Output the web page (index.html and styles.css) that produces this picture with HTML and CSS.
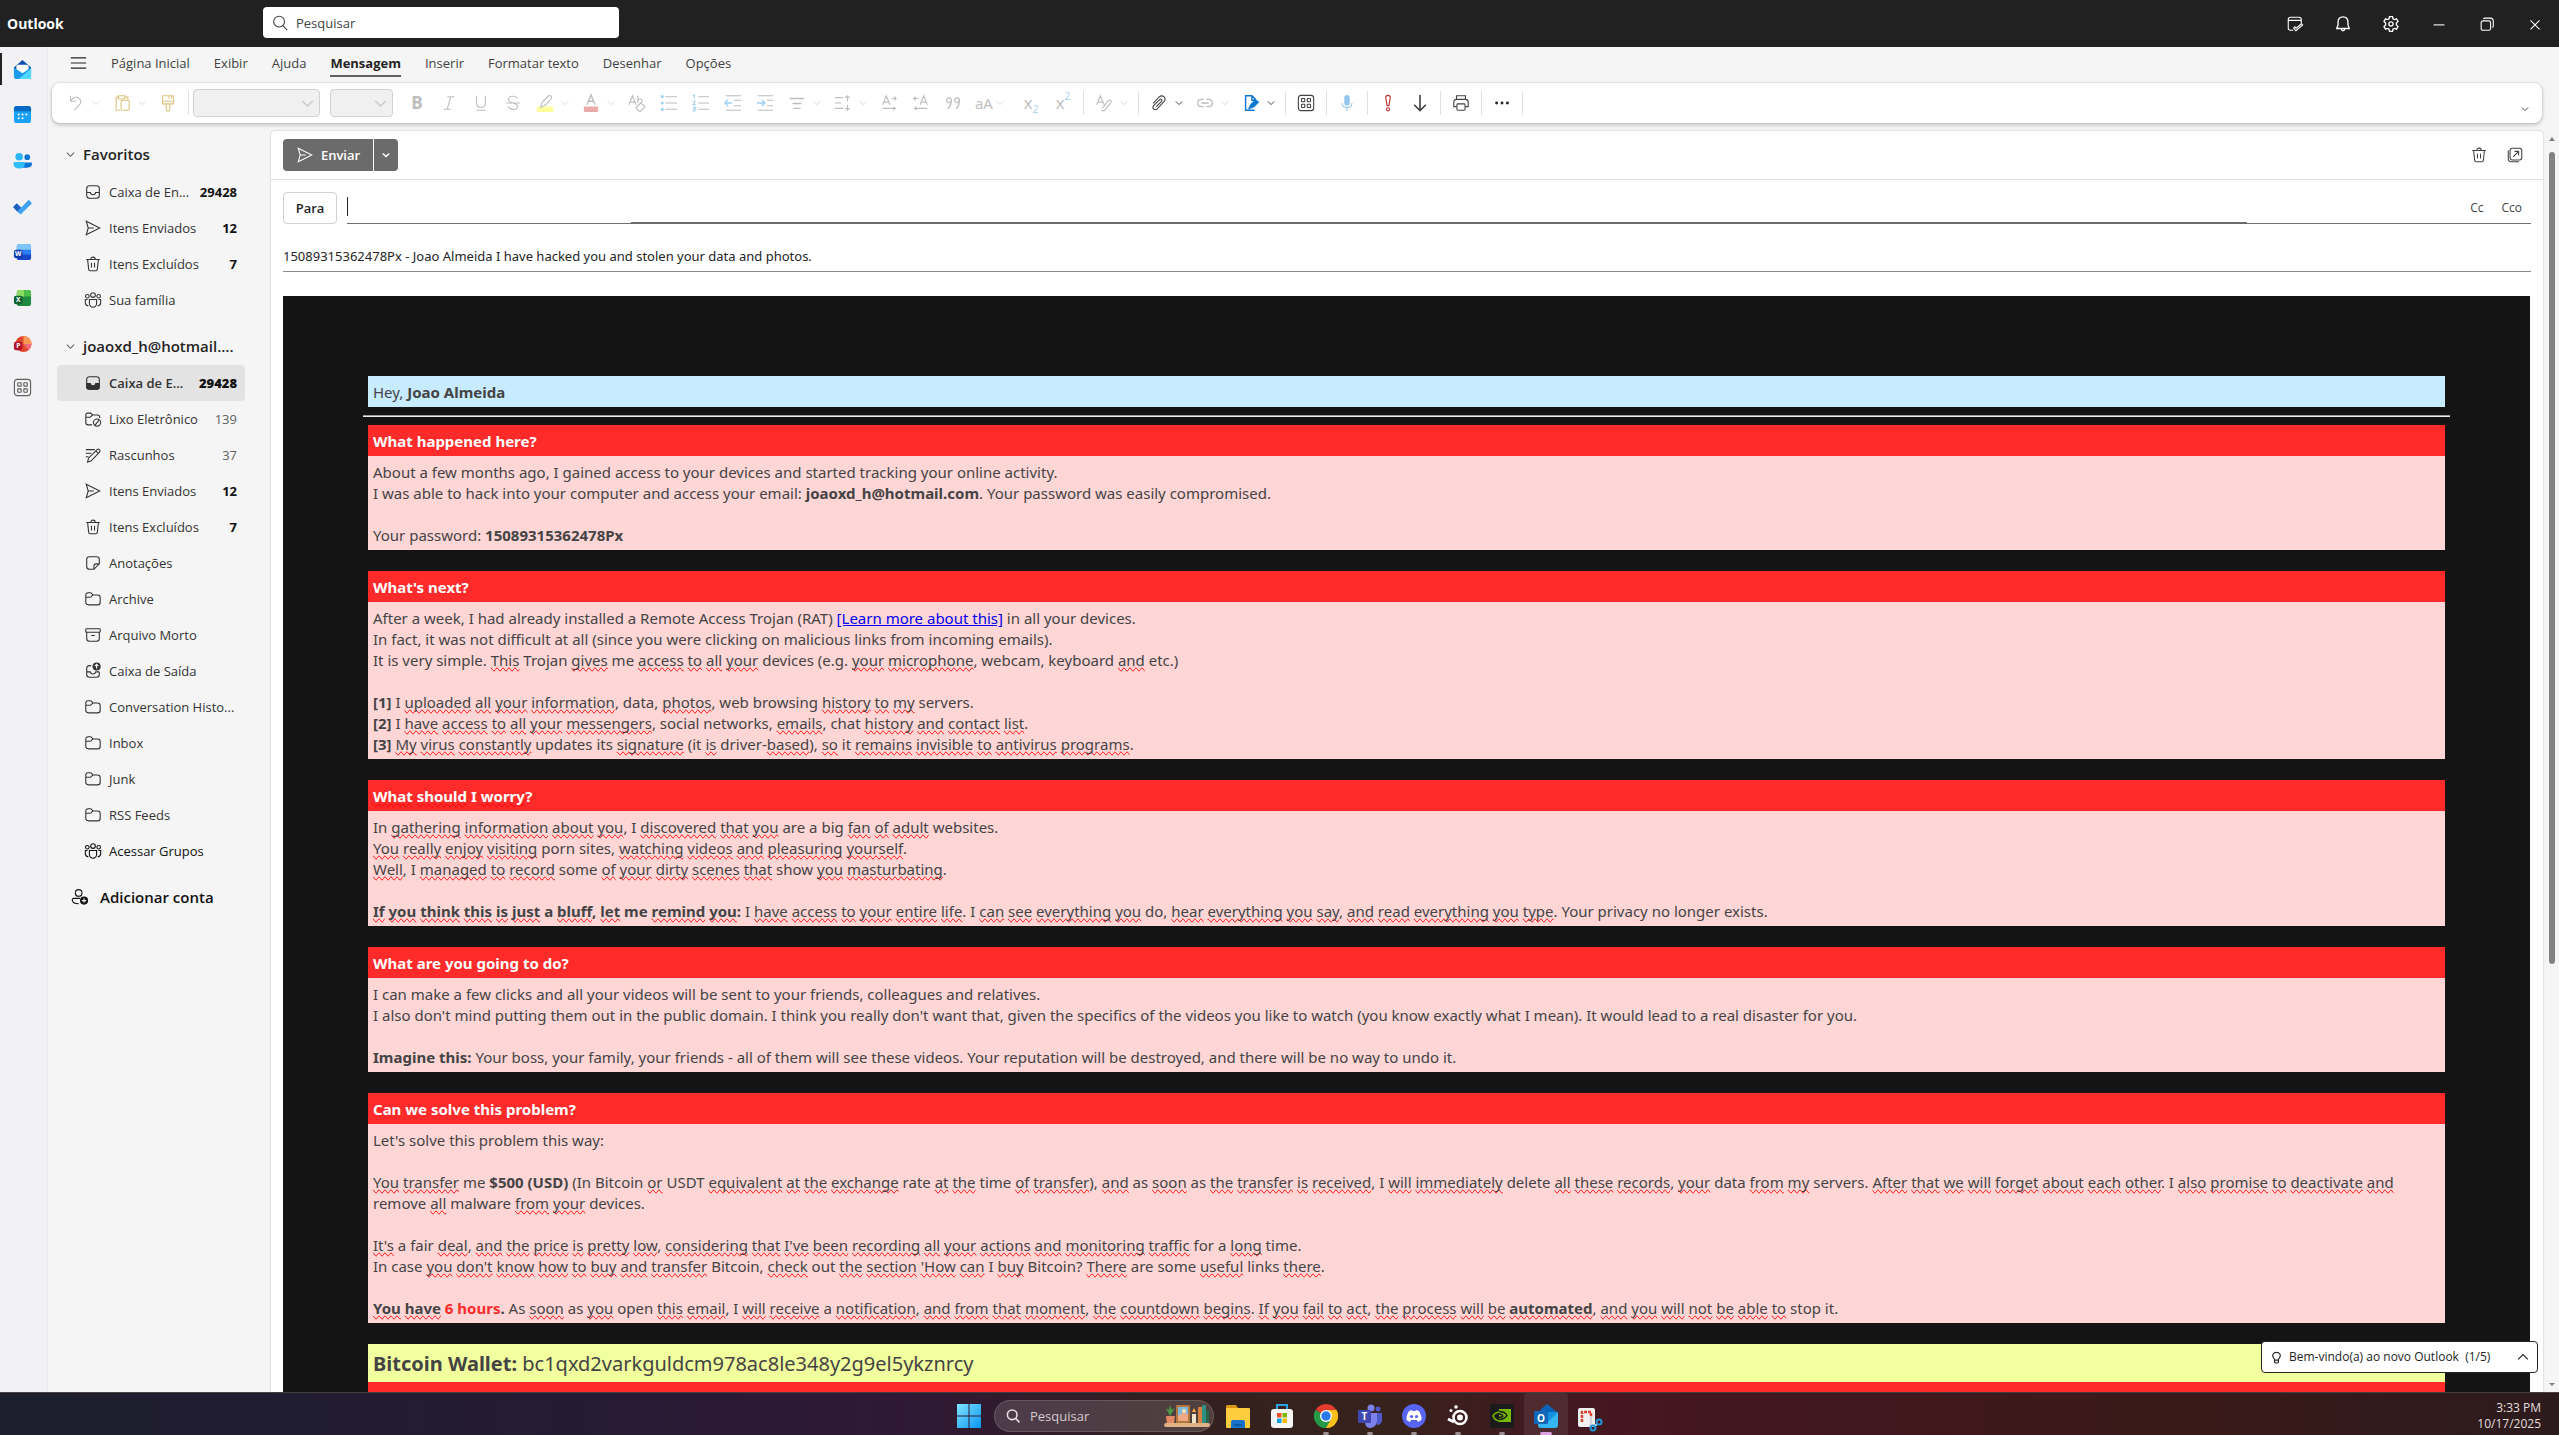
FILE: index.html
```html
<!DOCTYPE html>
<html lang="pt-BR">
<head>
<meta charset="utf-8">
<title>Outlook</title>
<link rel="stylesheet" href="styles.css">
</head>
<body>
<svg class="sprite" aria-hidden="true">
  <symbol id="chev" viewBox="0 0 10 10"><path d="M1 3l4 4 4-4"/></symbol>
  <symbol id="search" viewBox="0 0 20 20"><circle cx="9" cy="8.500" r="6"/><path d="M13.200 13l4.800 5"/></symbol>
  <symbol id="inbox" viewBox="0 0 20 20"><rect x="3" y="3" width="14" height="14" rx="3"/><path d="M3 10.500h4c.4 3.300 5.600 3.300 6 0h4"/></symbol>
  <symbol id="inboxfill" viewBox="0 0 20 20"><rect x="3" y="3" width="14" height="14" rx="3"/><path fill="currentColor" d="M3 10.500h4c.4 3.300 5.600 3.300 6 0h4v4q0 2.500-2.500 2.500h-9q-2.500 0-2.500-2.500z"/></symbol>
  <symbol id="send" viewBox="0 0 20 20"><path d="M2.500 2.500L17.500 10 2.500 17.500 4.700 10zM4.700 10H11"/></symbol>
  <symbol id="trash" viewBox="0 0 20 20"><path d="M2.500 5h15M7.500 5c0-3.500 5-3.500 5 0M4 5l1.200 11q.2 1.500 1.600 1.500h6.400q1.400 0 1.600-1.500L16 5M8.300 8.500v5.500M11.700 8.500v5.500"/></symbol>
  <symbol id="people" viewBox="0 0 20 20"><circle cx="10" cy="4.500" r="2.600"/><circle cx="3.700" cy="5.800" r="2"/><circle cx="16.300" cy="5.800" r="2"/><path d="M6 9.500h8v4.500a4 4 0 0 1-8 0zM4 9.500H1.500v3.500q0 3 3.300 3.500M16 9.500h2.500v3.500q0 3-3.300 3.500"/></symbol>
  <symbol id="junk" viewBox="0 0 20 20"><path d="M9 16.500H4.500q-2.500 0-2.500-2.500V5.500Q2 3.500 4 3.500h3.500l2 2H15q2.500 0 2.500 2.500v1M2 8h5l2.500-2.500"/><circle cx="14.500" cy="14" r="4"/><path d="M12 17l5-6"/></symbol>
  <symbol id="draft" viewBox="0 0 20 20"><path d="M2 4h10M2 8h6M2 12h3M4 18l1-4.500L14.500 4c1.800-1.800 4.500.9 2.800 2.700L8 16.500zM13 5.500l2.800 2.800"/></symbol>
  <symbol id="note" viewBox="0 0 20 20"><path d="M11 17H6q-3 0-3-3V6q0-3 3-3h8q3 0 3 3v5zM17 11h-3.500q-2.500 0-2.500 2.500V17"/></symbol>
  <symbol id="folder" viewBox="0 0 20 20"><path d="M2 5.500q0-2.500 2.500-2.500h3l2.500 2.500h5q3 0 3 3v5q0 3-3 3H5q-3 0-3-3zM2 8h5q1 0 3-2.500"/></symbol>
  <symbol id="archive" viewBox="0 0 20 20"><rect x="2" y="3" width="16" height="4" rx="1"/><path d="M3 7v7q0 3 3 3h8q3 0 3-3V7M8 10.500h4"/></symbol>
  <symbol id="outbox" viewBox="0 0 20 20"><path d="M8 4H6Q3 4 3 7v7q0 3 3 3h8q3 0 3-3v-3M3 11h4c.4 3 5.600 3 6 0h4"/><circle cx="14" cy="5" r="4.500" fill="currentColor" stroke="none"/><path stroke="#f5f5f5" d="M14 7.500v-5M12 4.500l2-2 2 2"/></symbol>
  <symbol id="addperson" viewBox="0 0 20 20"><circle cx="8.500" cy="5.500" r="3.700"/><path d="M10 11.500H3q-2 0-1.500 2.500.8 3.500 7 3.500"/><circle cx="14.500" cy="14" r="4.500" fill="currentColor" stroke="none"/><path stroke="#f5f5f5" d="M12 14h5M14.500 11.500v5"/></symbol>
  <symbol id="apps" viewBox="0 0 20 20"><rect x="1.500" y="1.500" width="17" height="17" rx="3"/><rect x="5" y="5" width="3.600" height="3.600" rx=".5"/><rect x="11.400" y="5" width="3.600" height="3.600" rx=".5"/><rect x="5" y="11.400" width="3.600" height="3.600" rx=".5"/><rect x="11.400" y="11.400" width="3.600" height="3.600" rx=".5"/></symbol>
  <symbol id="popout" viewBox="0 0 20 20"><rect x="4.500" y="2.500" width="13" height="13" rx="2.500"/><path d="M2.500 5v9q0 3.500 3.500 3.500h8.500M8 12l6-6M9.500 6H14v4.500"/></symbol>
</svg>

<header class="titlebar">
  <h1 class="brand">Outlook</h1>
  <label class="search">
    <svg class="ic"><use href="#search"/></svg>
    <input type="search" placeholder="Pesquisar" aria-label="Pesquisar">
  </label>
  <div class="window-actions">
    <button aria-label="Meu dia"><svg class="ic" viewBox="0 0 20 20"><path d="M8 17H5q-2.500 0-2.500-2.500V5Q2.500 2.500 5 2.500h9.500Q17 2.500 17 5v5M2.500 6H17M8.500 14.500l2.500 3L18.500 11l-1.300-1.300-6 5-1.200-1.500z"/></svg></button>
    <button aria-label="Notificações"><svg class="ic" viewBox="0 0 20 20"><path stroke-width="1.500" d="M10 2Q4.500 2 4.500 8v3L3 15h14l-1.500-4V8Q15.500 2 10 2zM8 15.500q.5 2 2 2t2-2"/></svg></button>
    <button aria-label="Configurações"><svg class="ic" viewBox="0 0 20 20"><circle cx="10" cy="10" r="2.300" stroke-width="1.500"/><path stroke-width="1.500" d="M8.300 1.800h3.400l.5 2.400 1.500.9 2.400-.8 1.700 2.900L16 8.900v2.200l1.800 1.700-1.700 2.900-2.400-.8-1.500.9-.5 2.400H8.300l-.5-2.400-1.500-.9-2.400.8-1.700-2.900L4 11.100V8.900L2.200 7.200l1.700-2.900 2.400.8 1.500-.9z"/></svg></button>
    <button aria-label="Minimizar"><svg class="ic" viewBox="0 0 20 20"><path d="M4 11h12"/></svg></button>
    <button aria-label="Restaurar"><svg class="ic" viewBox="0 0 20 20"><rect x="3.500" y="6.500" width="10.500" height="10.500" rx="2"/><path d="M6 4.500Q6.500 3.500 8 3.500h5.500q3.500 0 3.500 3.500v5q0 1.500-1 2"/></svg></button>
    <button aria-label="Fechar"><svg class="ic" viewBox="0 0 20 20"><path d="M5 6l10 10M15 6L5 16"/></svg></button>
  </div>
</header>

<div class="app">
  <nav class="rail" aria-label="Aplicativos">
    <a href="#" class="active" aria-label="Email"><svg viewBox="0 0 20 20"><path fill="#0f4fae" d="M1 8l9-8 9 8v6H1z"/><rect x="3.500" y="5" width="13" height="9" rx="2" fill="#fff"/><path fill="#1a9bee" d="M1 8l9 6 9-6v9q0 3-3 3H4q-3 0-3-3z"/><path fill="#4fd8ff" d="M6 20L19 9v8q0 3-3 3z"/></svg></a>
    <a href="#" aria-label="Calendário"><svg viewBox="0 0 20 20"><rect x="1" y="1" width="18" height="18" rx="3" fill="#1aa0f5"/><path fill="#0669c4" d="M4 1h12q3 0 3 3v2.500H1V4q0-3 3-3z"/><g fill="#fff"><circle cx="6" cy="10" r="1.100"/><circle cx="10" cy="10" r="1.100"/><circle cx="14" cy="10" r="1.100"/><circle cx="6" cy="14" r="1.100"/><circle cx="10" cy="14" r="1.100"/></g></svg></a>
    <a href="#" aria-label="Pessoas"><svg viewBox="0 0 20 20"><circle cx="6.500" cy="6" r="4" fill="#2cb5f8"/><circle cx="15" cy="6.500" r="3" fill="#0c74d2"/><path fill="#0c74d2" d="M10 12h9q1 0 1 1.500 0 4-5 4h-5z"/><path fill="#33bdfa" d="M2 11.500h9q1.500 0 1.500 1.500 0 5.500-6 5.500T.500 13Q.500 11.500 2 11.500z"/></svg></a>
    <a href="#" aria-label="To Do"><svg viewBox="0 0 20 20"><path fill="#1b5fc0" d="M0 10.500L4 6.500l5 5-4.500 4z"/><path fill="#3fa2f2" d="M4.500 15.500L16.500 3 20 6.500 8 18.500z"/></svg></a>
    <a href="#" aria-label="Word"><svg viewBox="0 0 20 20"><rect x="4" y="1" width="15" height="17" rx="3" fill="#2b7ff5"/><path fill="#7fc4fb" d="M7 1h9q3 0 3 3v3H4V4q0-3 3-3z"/><path fill="#1746c8" d="M4 12h15v3q0 3-3 3H7q-3 0-3-3z"/><rect x="1" y="7" width="9" height="9" rx="2" fill="#123fae"/><text x="5.500" y="14" class="logo-letter">W</text></svg></a>
    <a href="#" aria-label="Excel"><svg viewBox="0 0 20 20"><rect x="4" y="1" width="15" height="17" rx="3" fill="#1f8a3e"/><path fill="#8bdc62" d="M7 1h5v7H4V4q0-3 3-3z"/><path fill="#4cc04a" d="M12 1h4q3 0 3 3v4h-7z"/><rect x="1" y="7" width="9" height="9" rx="2" fill="#0c6232"/><text x="5.500" y="14" class="logo-letter">X</text></svg></a>
    <a href="#" aria-label="PowerPoint"><svg viewBox="0 0 20 20"><circle cx="11" cy="9.500" r="8.500" fill="#e2482e"/><path fill="#fb9a55" d="M11 1v8.500h8.500A8.500 8.500 0 0 0 11 1z"/><path fill="#f2687c" d="M11 9.500h8.500a8.500 8.500 0 0 1-3 6.300z"/><rect x="1" y="7" width="9" height="9" rx="2" fill="#b3162c"/><text x="5.500" y="14" class="logo-letter">P</text></svg></a>
    <a href="#" class="more" aria-label="Mais aplicativos"><svg class="ic"><use href="#apps"/></svg></a>
  </nav>

  <div class="workspace">
    <nav class="tabs" aria-label="Faixa de opções">
      <button class="burger" aria-label="Menu"><svg class="ic" viewBox="0 0 20 16"><path stroke-width="1.300" d="M1 2h18M1 8h18M1 14h18"/></svg></button>
      <a href="#">Página Inicial</a><a href="#">Exibir</a><a href="#">Ajuda</a><a href="#" class="current">Mensagem</a><a href="#">Inserir</a><a href="#">Formatar texto</a><a href="#">Desenhar</a><a href="#">Opções</a>
    </nav>

    <div class="ribbon" role="toolbar">
      <button class="drop off" disabled aria-label="Desfazer"><svg class="ic" viewBox="0 0 20 20"><path d="M4 2v6h6M4 8c3-5 6-5.500 9-3.500s3 6 0 8.500l-5 5"/></svg><svg class="chev"><use href="#chev"/></svg></button>
      <button class="drop off gold" disabled aria-label="Colar"><svg class="ic" viewBox="0 0 20 20"><path d="M6 3.500H3.500v14.500H8M13 3.500h3.500V7M6 2h7v3.500H6z"/><rect x="9" y="7" width="9" height="11" rx="1.500"/></svg><svg class="chev"><use href="#chev"/></svg></button>
      <button class="off gold" disabled aria-label="Pincel"><svg class="ic" viewBox="0 0 20 20"><path d="M4 2h12v9H4zM4 8h12M11 2v3M14 2v3M8 11v6q0 2 2 2t2-2v-6"/></svg></button>
      <i class="sep"></i>
      <span class="picker font-name"><select disabled aria-label="Fonte"><option></option></select><svg class="chev"><use href="#chev"/></svg></span>
      <span class="picker font-size"><select disabled aria-label="Tamanho"><option></option></select><svg class="chev"><use href="#chev"/></svg></span>
      <button class="off glyph bold" disabled>B</button>
      <button class="off" disabled aria-label="Itálico"><svg class="ic" viewBox="0 0 20 20"><path d="M8 3h8M4 17h8M12 3L8 17"/></svg></button>
      <button class="off" disabled aria-label="Sublinhado"><svg class="ic" viewBox="0 0 20 20"><path d="M5 2v8q0 5 5 5t5-5V2M5 18h10"/></svg></button>
      <button class="off" disabled aria-label="Tachado"><svg class="ic" viewBox="0 0 20 20"><path d="M15 5c-2-4-10-3-10 1 0 5 10 3 10 8 0 4-8 5-10.500 0M2.500 10h15"/></svg></button>
      <button class="drop off" disabled aria-label="Realce"><svg class="ic" viewBox="0 0 20 20"><path fill="#ff9" stroke="none" d="M1 14h18v6H1z"/><path d="M5 15l2-6 7-7q4-1 3 3l-6 7z"/></svg><svg class="chev"><use href="#chev"/></svg></button>
      <button class="drop off" disabled aria-label="Cor da fonte"><svg class="ic" viewBox="0 0 20 20"><rect x="2" y="14" width="16" height="6" rx="1" fill="#ecabab" stroke="none"/><path stroke-width="1.500" d="M5.500 12L10 1l4.500 11M7 8h6"/></svg><svg class="chev"><use href="#chev"/></svg></button>
      <button class="off" disabled aria-label="Limpar formatação"><svg class="ic" viewBox="0 0 20 20"><path d="M1 12L5 2l4 10M2.500 9h5M11 2v8M11 7c3-4 7 1 3 3M9 15l5-5 5 4-5 5h-2z"/></svg></button>
      <button class="off" disabled aria-label="Marcadores"><svg class="ic" viewBox="0 0 20 20"><path d="M6 3h13M6 10h13M6 17h13"/><path stroke="#9fd0f3" stroke-width="3" d="M1 3h3M1 10h3M1 17h3"/></svg></button>
      <button class="off" disabled aria-label="Numeração"><svg class="ic" viewBox="0 0 20 20"><path d="M7 3h12M7 10h12M7 17h12"/><path stroke="#9fd0f3" d="M1 2l1.500-1v4M1 8.500c3-2 3 1 0 3.500h3M1 15h3l-2 2c3 0 2 2.500-1 2"/></svg></button>
      <button class="off" disabled aria-label="Diminuir recuo"><svg class="ic" viewBox="0 0 20 20"><path d="M2 2h17M11 7h8M11 13h8M2 18h17"/><path stroke="#9fd0f3" stroke-width="1.500" d="M9 10H1M4.500 6.500L1 10l3.500 3.500"/></svg></button>
      <button class="off" disabled aria-label="Aumentar recuo"><svg class="ic" viewBox="0 0 20 20"><path d="M2 2h17M12 7h7M12 13h7M2 18h17"/><path stroke="#9fd0f3" stroke-width="1.500" d="M1 10h9M6.500 6.500L10 10l-3.500 3.500"/></svg></button>
      <button class="drop off" disabled aria-label="Alinhar"><svg class="ic" viewBox="0 0 20 20"><path stroke-width="1.500" d="M2 5h16M5 10.500h10M6 16h8"/></svg><svg class="chev"><use href="#chev"/></svg></button>
      <button class="drop off" disabled aria-label="Espaçamento"><svg class="ic" viewBox="0 0 20 20"><path d="M1 4h9M1 10h7M1 16h9M15 2v6M12.500 4.500L15 2l2.500 2.500M15 18v-6M12.500 15.500L15 18l2.500-2.500"/></svg><svg class="chev"><use href="#chev"/></svg></button>
      <button class="off" disabled aria-label="Esquerda para direita"><svg class="ic" viewBox="0 0 20 20"><path d="M3 12L7 2l4 10M4.500 9h5M13 5h5M16 3l2 2-2 2M3 16h14M15 14l2 2-2 2"/></svg></button>
      <button class="off" disabled aria-label="Direita para esquerda"><svg class="ic" viewBox="0 0 20 20"><path d="M9 12l4-10 4 10M10.500 9h5M7 5H2M4 3L2 5l2 2M17 16H3M5 14l-2 2 2 2"/></svg></button>
      <button class="off" disabled aria-label="Citação"><svg class="ic" viewBox="0 0 20 20"><path stroke-width="1.500" d="M4 16c3-1 4-4 4-9M13 16c3-1 4-4 4-9"/><circle cx="5.500" cy="7" r="2.700"/><circle cx="14.500" cy="7" r="2.700"/></svg></button>
      <button class="drop off glyph" disabled aria-label="Maiúsculas"><span>aA</span><svg class="chev"><use href="#chev"/></svg></button>
      <button class="off glyph" disabled>x<sub>2</sub></button>
      <button class="off glyph" disabled>x<sup>2</sup></button>
      <i class="sep"></i>
      <button class="drop off" disabled aria-label="Estilos"><svg class="ic" viewBox="0 0 20 20"><path d="M2 12L6 2l4 10M3.500 9h5M8 16l7-9q3-1 3 2l-7 9q-2 1-4 0"/></svg><svg class="chev"><use href="#chev"/></svg></button>
      <i class="sep"></i>
      <button class="drop" aria-label="Anexar"><svg class="ic" viewBox="0 0 20 20"><path d="M3.500 10.500L10 3.500c4-3.500 9 1 5.500 5L8 16.500c-3 2.500-6-.5-4-3.500L11 6c1.500-1 3 .5 2 2l-6 6"/></svg><svg class="chev"><use href="#chev"/></svg></button>
      <button class="drop off" disabled aria-label="Link"><svg class="ic" viewBox="0 0 20 20"><path stroke-width="1.500" d="M8.500 6H6q-4 0-4 4t4 4h2.500M11.500 6H14q4 0 4 4t-4 4h-2.500M6 10h8"/></svg><svg class="chev"><use href="#chev"/></svg></button>
      <button class="drop" aria-label="Assinatura"><svg class="ic" viewBox="0 0 20 20"><g stroke="#0f78d4" stroke-width="1.600"><path d="M9 18H4V2h7l4 4v2M11 2v5h4M5 18h9"/><path fill="#0f78d4" d="M8 16l2-4 5-5 3 2-5 5z"/></g></svg><svg class="chev"><use href="#chev"/></svg></button>
      <i class="sep"></i>
      <button aria-label="Aplicativos"><svg class="ic"><use href="#apps"/></svg></button>
      <i class="sep"></i>
      <button aria-label="Ditar"><svg class="ic" viewBox="0 0 20 20"><rect x="7" y="1" width="6" height="12" rx="3" fill="#94c6ee" stroke="none"/><path stroke="#94c6ee" d="M4.500 10q0 5 5.500 5t5.500-5M10 15v4"/></svg></button>
      <i class="sep"></i>
      <button aria-label="Alta prioridade"><svg class="ic" viewBox="0 0 20 20"><g stroke="#b5373b" stroke-width="1.300"><path d="M7.500 4q0-2.500 2.500-2.500T12.500 4L11 13H9z"/><circle cx="10" cy="17" r="1.700"/></g></svg></button>
      <button aria-label="Baixa prioridade"><svg class="ic" viewBox="0 0 20 20"><path stroke-width="1.800" d="M10 1v17M3.500 12l6.500 6.500 6.500-6.500"/></svg></button>
      <i class="sep"></i>
      <button aria-label="Imprimir"><svg class="ic" viewBox="0 0 20 20"><path d="M5 6V2h10v4M5 14H2V9q0-3 3-3h10q3 0 3 3v5h-3"/><rect x="5.500" y="11" width="9" height="7" rx="1"/></svg></button>
      <i class="sep"></i>
      <button aria-label="Mais opções"><svg class="ic" viewBox="0 0 20 20"><g fill="#222" stroke="none"><circle cx="4" cy="10" r="1.600"/><circle cx="10" cy="10" r="1.600"/><circle cx="16" cy="10" r="1.600"/></g></svg></button>
      <i class="sep"></i>
      <button class="collapse" aria-label="Recolher"><svg class="chev"><use href="#chev"/></svg></button>
    </div>

    <div class="content">
      <aside class="folders">
        <h2><svg class="chev"><use href="#chev"/></svg>Favoritos</h2>
        <a href="#"><svg class="ic"><use href="#inbox"/></svg><span>Caixa de En...</span><b>29428</b></a>
        <a href="#"><svg class="ic"><use href="#send"/></svg><span>Itens Enviados</span><b>12</b></a>
        <a href="#"><svg class="ic"><use href="#trash"/></svg><span>Itens Excluídos</span><b>7</b></a>
        <a href="#"><svg class="ic"><use href="#people"/></svg><span>Sua família</span></a>
        <h2 class="account"><svg class="chev"><use href="#chev"/></svg>joaoxd_h@hotmail....</h2>
        <a href="#" class="selected"><svg class="ic"><use href="#inboxfill"/></svg><span>Caixa de E...</span><b>29428</b></a>
        <a href="#"><svg class="ic"><use href="#junk"/></svg><span>Lixo Eletrônico</span><em>139</em></a>
        <a href="#"><svg class="ic"><use href="#draft"/></svg><span>Rascunhos</span><em>37</em></a>
        <a href="#"><svg class="ic"><use href="#send"/></svg><span>Itens Enviados</span><b>12</b></a>
        <a href="#"><svg class="ic"><use href="#trash"/></svg><span>Itens Excluídos</span><b>7</b></a>
        <a href="#"><svg class="ic"><use href="#note"/></svg><span>Anotações</span></a>
        <a href="#"><svg class="ic"><use href="#folder"/></svg><span>Archive</span></a>
        <a href="#"><svg class="ic"><use href="#archive"/></svg><span>Arquivo Morto</span></a>
        <a href="#"><svg class="ic"><use href="#outbox"/></svg><span>Caixa de Saída</span></a>
        <a href="#"><svg class="ic"><use href="#folder"/></svg><span>Conversation Histo...</span></a>
        <a href="#"><svg class="ic"><use href="#folder"/></svg><span>Inbox</span></a>
        <a href="#"><svg class="ic"><use href="#folder"/></svg><span>Junk</span></a>
        <a href="#"><svg class="ic"><use href="#folder"/></svg><span>RSS Feeds</span></a>
        <a href="#" class="dark"><svg class="ic"><use href="#people"/></svg><span>Acessar Grupos</span></a>
        <button class="add-account"><svg class="ic"><use href="#addperson"/></svg>Adicionar conta</button>
      </aside>

      <main class="compose">
        <div class="actions">
          <div class="send">
            <button class="send-main"><svg class="ic"><use href="#send"/></svg>Enviar</button>
            <button class="send-more" aria-label="Mais opções de envio"><svg class="chev"><use href="#chev"/></svg></button>
          </div>
          <button class="plain" aria-label="Descartar"><svg class="ic"><use href="#trash"/></svg></button>
          <button class="plain" aria-label="Abrir em nova janela"><svg class="ic"><use href="#popout"/></svg></button>
        </div>
        <div class="to-row">
          <button class="to-button">Para</button>
          <div class="to-field">
            <span class="caret"></span>
            <input type="text" aria-label="Para">
            <button>Cc</button><button>Cco</button>
          </div>
        </div>
        <input class="subject" type="text" aria-label="Assunto" value="15089315362478Px - Joao Almeida I have hacked you and stolen your data and photos.">

        <article class="mail">
          <p class="hey">Hey, <b>Joao Almeida</b></p>
          <hr>
          <section>
            <h3>What happened here?</h3>
            <p>About a few months ago, I gained access to your devices and started tracking your online activity.<br>
            I was able to hack into your computer and access your email: <b>joaoxd_h@hotmail.com</b>. Your password was easily compromised.<br><br>
            Your password: <b>15089315362478Px</b></p>
          </section>
          <section>
            <h3>What's next?</h3>
            <p>After a week, I had already installed a Remote Access Trojan (RAT) <a href="#">[Learn more about this]</a> in all your devices.<br>
            In fact, it was not difficult at all (since you were clicking on malicious links from incoming emails).<br>
            It is very simple. <u>This</u> Trojan <u>gives</u> me <u>access</u> <u>to</u> <u>all</u> <u>your</u> devices (e.g. <u>your</u> <u>microphone</u>, webcam, keyboard <u>and</u> etc.)<br><br>
            <b>[1]</b> I <u>uploaded</u> <u>all</u> <u>your</u> <u>information</u>, data, <u>photos</u>, web browsing <u>history</u> <u>to</u> <u>my</u> servers.<br>
            <b>[2]</b> I <u>have</u> <u>access</u> <u>to</u> <u>all</u> <u>your</u> <u>messengers</u>, social networks, <u>emails</u>, chat <u>history</u> <u>and</u> <u>contact</u> <u>list</u>.<br>
            <b>[3]</b> <u>My</u> <u>virus</u> <u>constantly</u> updates its <u>signature</u> (it <u>is</u> driver-<u>based</u>), <u>so</u> it <u>remains</u> <u>invisible</u> <u>to</u> <u>antivirus</u> <u>programs</u>.</p>
          </section>
          <section>
            <h3><u>What</u> <u>should</u> I <u>worry</u>?</h3>
            <p>In <u>gathering</u> <u>information</u> <u>about</u> <u>you</u>, I <u>discovered</u> <u>that</u> <u>you</u> are a big <u>fan</u> <u>of</u> <u>adult</u> websites.<br>
            <u>You</u> <u>really</u> <u>enjoy</u> <u>visiting</u> porn sites, <u>watching</u> <u>videos</u> <u>and</u> <u>pleasuring</u> <u>yourself</u>.<br>
            <u>Well</u>, I <u>managed</u> <u>to</u> <u>record</u> some <u>of</u> <u>your</u> <u>dirty</u> <u>scenes</u> <u>that</u> show <u>you</u> <u>masturbating</u>.<br><br>
            <b><u>If</u> <u>you</u> <u>think</u> <u>this</u> <u>is</u> <u>just</u> a <u>bluff</u>, <u>let</u> me <u>remind</u> <u>you</u>:</b> I <u>have</u> <u>access</u> <u>to</u> <u>your</u> <u>entire</u> <u>life</u>. I <u>can</u> <u>see</u> <u>everything</u> <u>you</u> do, <u>hear</u> <u>everything</u> <u>you</u> <u>say</u>, <u>and</u> <u>read</u> <u>everything</u> <u>you</u> <u>type</u>. Your privacy no longer exists.</p>
          </section>
          <section>
            <h3>What are you going to do?</h3>
            <p>I can make a few clicks and all your videos will be sent to your friends, colleagues and relatives.<br>
            I also don't mind putting them out in the public domain. I think you really don't want that, given the specifics of the videos you like to watch (you know exactly what I mean). It would lead to a real disaster for you.<br><br>
            <b>Imagine this:</b> Your boss, your family, your friends - all of them will see these videos. Your reputation will be destroyed, and there will be no way to undo it.</p>
          </section>
          <section>
            <h3>Can we solve this problem?</h3>
            <p>Let's solve this problem this way:<br><br>
            <u>You</u> <u>transfer</u> me <b>$500 (USD)</b> (In Bitcoin <u>or</u> USDT <u>equivalent</u> <u>at</u> <u>the</u> <u>exchange</u> rate <u>at</u> <u>the</u> time <u>of</u> <u>transfer</u>), <u>and</u> as <u>soon</u> as <u>the</u> <u>transfer</u> <u>is</u> <u>received</u>, I <u>will</u> <u>immediately</u> delete <u>all</u> <u>these</u> <u>records</u>, <u>your</u> data <u>from</u> <u>my</u> servers. <u>After</u> <u>that</u> <u>we</u> <u>will</u> <u>forget</u> <u>about</u> <u>each</u> <u>other</u>. I <u>also</u> <u>promise</u> <u>to</u> <u>deactivate</u> <u>and</u> remove <u>all</u> malware <u>from</u> <u>your</u> devices.<br><br>
            <u>It's</u> a fair <u>deal</u>, <u>and</u> <u>the</u> <u>price</u> <u>is</u> <u>pretty</u> <u>low</u>, <u>considering</u> <u>that</u> <u>I've</u> <u>been</u> <u>recording</u> <u>all</u> <u>your</u> <u>actions</u> <u>and</u> <u>monitoring</u> <u>traffic</u> for a <u>long</u> time.<br>
            In case <u>you</u> <u>don't</u> <u>know</u> <u>how</u> <u>to</u> <u>buy</u> <u>and</u> <u>transfer</u> Bitcoin, <u>check</u> out <u>the</u> <u>section</u> <u>'How</u> <u>can</u> I <u>buy</u> Bitcoin? <u>There</u> are some <u>useful</u> links <u>there</u>.<br><br>
            <b><u>You</u> <u>have</u> <span class="hot">6 hours</span>.</b> As <u>soon</u> as <u>you</u> open <u>this</u> <u>email</u>, I <u>will</u> <u>receive</u> a <u>notification</u>, <u>and</u> <u>from</u> <u>that</u> <u>moment</u>, <u>the</u> <u>countdown</u> <u>begins</u>. <u>If</u> <u>you</u> <u>fail</u> <u>to</u> <u>act</u>, <u>the</u> <u>process</u> <u>will</u> <u>be</u> <b><u>automated</u></b>, <u>and</u> <u>you</u> <u>will</u> <u>not</u> <u>be</u> <u>able</u> <u>to</u> stop it.</p>
          </section>
          <section>
            <p class="wallet"><b>Bitcoin Wallet:</b> bc1qxd2varkguldcm978ac8le348y2g9el5ykznrcy</p>
            <div class="band"></div>
          </section>
        </article>
      </main>
      <div class="scrollbar" aria-hidden="true"><i class="up"></i><i class="thumb"></i><i class="down"></i></div>
    </div>
  </div>

  <button class="tip"><svg class="ic" viewBox="0 0 20 20"><path stroke-width="1.800" d="M7 14q0-2-1.500-3.500C2 6 5.500 2 10 2s8 4 4.500 8.500Q13 12 13 14zM7 14v3q0 1.500 3 1.500t3-1.500v-3"/></svg><span>Bem-vindo(a) ao novo Outlook&nbsp; (1/5)</span><svg class="chev"><use href="#chev"/></svg></button>
</div>

<footer class="taskbar">
  <div class="dock">
    <button aria-label="Iniciar"><svg viewBox="0 0 24 24"><defs><linearGradient id="win" x2="1" y2="1"><stop stop-color="#7fe4ff"/><stop offset="1" stop-color="#0a94f5"/></linearGradient></defs><path fill="url(#win)" d="M0 0h11.500v11.500H0zM12.500 0H24v11.500H12.500zM0 12.500h11.500V24H0zM12.500 12.500H24V24H12.500z"/></svg></button>
    <label class="dock-search"><svg class="ic"><use href="#search"/></svg><input type="search" placeholder="Pesquisar" aria-label="Pesquisar no Windows">
      <svg class="shelf" viewBox="0 0 46 24"><rect x="12" y="1" width="14" height="18" rx="1" fill="#b5763e"/><path fill="#7db8dc" d="M14 3h10v14H14z"/><path fill="#f0a984" d="M14 12l6-4 4 3v6H14z"/><circle cx="20" cy="7" r="2" fill="#f8e2b0"/><path fill="#4d9a48" d="M6 12L2 4l3 2 1-5 2 5 3-2z"/><path fill="#e28a68" d="M2 12h9l-1 8H3z"/><rect x="28" y="10" width="4" height="9" fill="#f2e3c8"/><path fill="#ffb13b" d="M30 4l2 4h-4z"/><rect x="34" y="3" width="4" height="17" fill="#d7803d"/><rect x="38" y="1" width="4" height="19" fill="#2f8f82"/><rect x="42" y="6" width="3" height="14" fill="#27644a"/><rect x="0" y="19" width="46" height="4" rx="2" fill="#e0b184"/></svg></label>
    <button aria-label="Explorador de Arquivos"><svg viewBox="0 0 24 24"><path fill="#d99614" d="M1 1h9l2 3v5H0V2z"/><rect y="4" width="24" height="20" rx="1" fill="#fdcd3f"/><path fill="#1574c9" d="M5 24v-6q0-2 2-2h10q2 0 2 2v6z"/><path fill="#0c5aa6" d="M8 20h8v2H8z"/></svg></button>
    <button aria-label="Microsoft Store"><svg viewBox="0 0 24 24"><path fill="none" stroke="#2aa6e8" stroke-width="2" d="M7 6V1h10v5"/><rect x="1" y="5" width="22" height="19" rx="3" fill="#f5f5f5"/><path fill="#f04e22" d="M7 9h4.500v4.500H7z"/><path fill="#7db800" d="M12.500 9H17v4.500h-4.500z"/><path fill="#00a3ee" d="M7 14.500h4.500V19H7z"/><path fill="#ffb800" d="M12.500 14.500H17V19h-4.500z"/></svg></button>
    <button class="run" aria-label="Chrome"><svg viewBox="0 0 24 24"><path fill="#e33b2e" d="M12 12L1.600 6a12 12 0 0 1 20.800 0z"/><path fill="#fbc116" d="M12 12l10.400-6A12 12 0 0 1 12 24z"/><path fill="#279847" d="M12 12v12A12 12 0 0 1 1.600 6z"/><path fill="#fbc116" d="M12 6h10.400A12 12 0 0 1 12 24l5.200-9z"/><path fill="#279847" d="M1.600 6l5.200 9 10.400 0L12 24A12 12 0 0 1 1.600 6z"/><circle cx="12" cy="12" r="6" fill="#fff"/><circle cx="12" cy="12" r="4.700" fill="#2b78e8"/></svg></button>
    <button class="run" aria-label="Teams"><svg viewBox="0 0 24 24"><circle cx="13" cy="4" r="3.500" fill="#7b83eb"/><circle cx="20" cy="5" r="2.500" fill="#5059c9"/><path fill="#5059c9" d="M16 9h8v8q-1 4-5 4z"/><path fill="#7b83eb" d="M7 9h12v8q-1 7-7 7-4 0-5-5z"/><rect y="6" width="13" height="13" rx="1" fill="#4048b0"/><text x="6.500" y="16" class="dock-letter">T</text></svg></button>
    <button class="run" aria-label="Discord"><svg viewBox="0 0 24 24"><circle cx="12" cy="12" r="12" fill="#5865f2"/><path fill="#fff" d="M7 7l3-1 .5 1h3L14 6l3 1q3 5 2.500 9L16 18l-1-2H9l-1 2-3.500-2Q4 12 7 7z"/><circle cx="9.500" cy="12.500" r="1.600" fill="#5865f2"/><circle cx="14.500" cy="12.500" r="1.600" fill="#5865f2"/></svg></button>
    <button class="run" aria-label="SteelSeries GG"><svg viewBox="0 0 24 24"><g fill="none" stroke="#fff"><circle cx="14" cy="13.500" r="6.500" stroke-width="2.600"/><path stroke-width="3" d="M2 15l6 3"/></g><circle cx="14" cy="13.500" r="3" fill="#fff"/><circle cx="10" cy="3" r="1.800" fill="#fff"/><circle cx="5" cy="6.500" r="1.500" fill="#fff"/></svg></button>
    <button class="run" aria-label="NVIDIA"><svg viewBox="0 0 24 24"><path fill="#1b1b1b" d="M0 0h24v24H0z"/><path fill="#76b900" d="M9 5h12v13H9z"/><g fill="none" stroke="#76b900" stroke-width="1.600"><path d="M9 8q-5 1-6 4 2 5 8 5"/></g><g fill="none" stroke="#1b1b1b" stroke-width="1.400"><path d="M9 7.500q6 0 8 4-3 4-8 4M9 10q3 0 4 2-2 2-4 1"/></g></svg></button>
    <button class="run open" aria-label="Outlook"><svg viewBox="0 0 24 24"><path fill="#0a63b5" d="M4 8l9-8 10 8v8H4z"/><path fill="#35b6f2" d="M4 10l10 6 10-8v13q0 3-3 3H7q-3 0-3-3z"/><path fill="#1490df" d="M12 8l12 0-12 12z"/><rect y="7" width="14" height="13" rx="1" fill="#1066b8"/><text x="7" y="17.500" class="dock-letter">O</text></svg></button>
    <button aria-label="Ferramenta de Captura"><svg viewBox="0 0 24 24"><rect x="0" y="4" width="17" height="19" rx="2" fill="#f1f1f1"/><path fill="none" stroke="#d8432c" stroke-width="2.500" stroke-dasharray="3 1" d="M4 18V8h9v6"/><path stroke="#cfd5da" stroke-width="2" d="M13 12v8M11 21h8"/><circle cx="15" cy="24" r="2.500" fill="none" stroke="#2196d8" stroke-width="2"/><circle cx="21" cy="18" r="2.500" fill="none" stroke="#2196d8" stroke-width="2"/></svg></button>
  </div>
  <div class="clock"><time>3:33 PM</time><time>10/17/2025</time></div>
</footer>
</body>
</html>
```
FILE: styles.css
```css
* { box-sizing: border-box; }
body {
  margin: 0;
  height: 100vh;
  display: flex;
  flex-direction: column;
  overflow: hidden;
  background: #f5f5f5;
  color: #242424;
  font: 13px/20px "Open Sans", "Noto Sans", sans-serif;
}
.sprite { position: absolute; width: 0; height: 0; }
button, input, select { font: inherit; color: inherit; border: 0; background: none; padding: 0; margin: 0; }
input { outline: 0; min-width: 0; }
a { color: inherit; text-decoration: none; }
h1, h2, h3, p { margin: 0; }
.ic { width: 18px; height: 18px; flex: none; fill: none; stroke: currentColor; stroke-width: 1.2; overflow: visible; }
.chev { width: 8px; height: 8px; flex: none; fill: none; stroke: currentColor; stroke-width: 1.2; }

/* Title bar */
.titlebar { flex: none; height: 47px; display: flex; align-items: center; background: #212121; color: #fff; }
.brand { width: 263px; padding-left: 7px; font-size: 14px; font-weight: 700; }
.search { width: 356px; height: 31px; margin-bottom: 2px; padding: 0 8px; display: flex; align-items: center; gap: 7px; background: #fff; color: #424242; border-radius: 4px; }
.search input { flex: 1; }
.search input::placeholder { color: #424242; opacity: 1; }
.window-actions { margin-left: auto; display: flex; }
.window-actions button { width: 48px; height: 46px; display: grid; place-items: center; }

/* Shell */
.app { flex: 1; min-height: 0; display: flex; position: relative; }
.rail { flex: none; width: 48px; border-right: 1px solid #ececef; background: #f2f2f5; }
.rail a { height: 46px; padding-right: 2px; display: grid; place-items: center; }
.rail a.active { border-left: 2px solid #242424; padding-right: 4px; height: 32px; margin: 6px 0; }
.rail svg { width: 19px; height: 19px; }
.rail .more { height: 40px; color: #616161; }
.logo-letter { fill: #fff; font: 700 7px "Open Sans", sans-serif; text-anchor: middle; }
.workspace { flex: 1; min-width: 0; display: flex; flex-direction: column; }

/* Ribbon */
.tabs { flex: none; height: 32px; margin-bottom: 4px; padding-left: 22px; display: flex; align-items: center; gap: 24px; color: #424242; }
.tabs a { line-height: 28px; }
.tabs .burger svg { width: 17px; height: 14px; display: block; }
.tabs .burger { color: #242424; }
.tabs .current { font-weight: 700; color: #242424; line-height: 24px; margin-top: 2px; border-bottom: 2px solid #616161; }
.ribbon { flex: none; height: 40px; margin: 0 17px 8px 4px; padding: 0 8px; display: flex; align-items: center; background: #fff; border-radius: 8px; box-shadow: 0 0 2px #0003, 0 2px 4px #0003; color: #424242; }
.ribbon button { flex: none; width: 32px; height: 32px; display: flex; align-items: center; justify-content: center; }
.ribbon .drop { width: 46px; justify-content: flex-start; padding-left: 7px; gap: 7px; }
.ribbon .off { color: #bdbdbd; }
.ribbon .gold { color: #dcc27f; }
.ribbon .off .chev { color: #d6d6d6; }
.ribbon .glyph { font-size: 17px; }
.ribbon .glyph.drop { gap: 3px; font-size: 15px; padding-left: 6px; }
.ribbon .bold { font-weight: 700; }
.ribbon sub, .ribbon sup { font-size: 10px; color: #9fd0f3; line-height: 0; }
.ribbon sub { vertical-align: sub; margin-top: 12px; }
.ribbon sup { margin-bottom: 14px; }
.sep { flex: none; width: 1px; height: 24px; margin: 0 4px; background: #e0e0e0; }
.picker { flex: none; height: 28px; display: flex; align-items: center; padding-right: 5px; border: 1px solid #d1d1d1; border-radius: 4px; background: #f0f0f0; }
.picker select { appearance: none; flex: 1; min-width: 0; height: 26px; opacity: 1; }
.picker .chev { width: 13px; height: 13px; color: #c4c4c4; stroke-width: 1; }
.font-name { width: 127px; margin-right: 10px; }
.font-size { width: 63px; margin-right: 8px; }
.ribbon .collapse { margin-left: auto; width: 18px; padding-top: 12px; }

/* Folder list */
.content { flex: 1; min-height: 0; display: flex; }
.folders { flex: none; width: 223px; padding: 4px 26px 0 9px; }
.folders h2 { height: 38px; margin-bottom: 1px; display: flex; align-items: center; gap: 8px; padding-left: 9px; font-size: 15px; font-weight: 600; white-space: nowrap; }
.folders h2 .chev { width: 9px; height: 9px; color: #616161; }
.folders .account { height: 36px; margin: 10px 0 1px; }
.folders a { height: 36px; padding: 0 8px 0 27px; display: flex; align-items: center; gap: 7px; border-radius: 4px; white-space: nowrap; color: #333; }
.folders a b { margin-left: auto; color: #111; }
.folders a em { margin-left: auto; font-style: normal; color: #616161; }
.folders .selected { background: #e3e3e3; font-weight: 600; }
.folders .dark { color: #111; }
.add-account { height: 36px; margin-top: 10px; padding-left: 14px; display: flex; align-items: center; gap: 11px; font-size: 15px; font-weight: 600; color: #111; }

/* Compose pane */
.compose { flex: 1; min-width: 0; background: #fff; border-radius: 4px 4px 0 0; box-shadow: 0 0 2px #0004; display: flex; flex-direction: column; overflow: hidden; }
.actions { flex: none; height: 49px; padding: 0 19px 0 12px; display: flex; align-items: center; gap: 18px; border-bottom: 1px solid #e0e0e0; }
.send { display: flex; gap: 1px; margin-right: auto; }
.send button { height: 32px; background: #6b6b6b; color: #fff; display: flex; align-items: center; justify-content: center; font-weight: 600; }
.send-main { width: 90px; gap: 7px; border-radius: 4px 0 0 4px; }
.send-more { width: 24px; border-radius: 0 4px 4px 0; }
.send-more .chev { stroke-width: 1.8; }
.plain { width: 18px; height: 18px; color: #424242; }
.plain svg { display: block; }
.to-row { flex: none; margin: 12px 12px 0; display: flex; gap: 10px; }
.to-button { width: 54px; height: 32px; border: 1px solid #d1d1d1; border-radius: 4px; font-weight: 600; }
.to-field { flex: 1; height: 32px; display: flex; align-items: center; border-bottom: 1px solid #707070; position: relative; padding-right: 9px; }
.to-field::after { content: ""; position: absolute; left: 13%; right: 13%; bottom: -1px; height: 2px; background: #6b6b6b; }
.to-field input { flex: 1; }
.to-field button { font-size: 12px; color: #424242; margin-left: 18px; }
.caret { width: 1px; height: 19px; margin-bottom: 2px; background: #242424; }
.subject { flex: none; margin: 16px 12px 0; height: 32px; font-family: "Noto Sans", sans-serif; border-bottom: 1px solid #8a8a8a; }

/* Message body */
.mail { flex: none; margin: 24px 13px 0 12px; padding: 80px 85px 0; background: #141414; color: #444; font-family: "Noto Sans", sans-serif; font-size: 15px; line-height: 21px; }
.mail p, .mail h3 { padding: 6px 5px 4px; }
.mail .hey { background: #c7ebff; }
.mail hr { margin: 8px -5px; height: 2px; border: 0; border-top: 1px solid #9a9a9a; background: #eee; }
.mail section { margin-bottom: 21px; }
.mail h3 { background: #ff2b2b; color: #fff; font-size: 15px; font-weight: 700; }
.mail section p { background: #ffd6d6; }
.mail section p a { color: #00e; text-decoration: underline; }
.mail u { text-decoration: underline wavy #e11; text-decoration: spelling-error; }
.mail .hot { color: #ff2b2b; }
.mail section .wallet { background: #f2ff9e; font-size: 20px; line-height: 28px; }
.band { height: 31px; background: #ff2b2b; }

.scrollbar { flex: none; width: 16px; padding: 6px 0 6px 6px; display: flex; flex-direction: column; }
.scrollbar .up { width: 6px; height: 4px; background: #808080; clip-path: polygon(50% 0, 100% 100%, 0 100%); }
.scrollbar .thumb { width: 6px; height: 65%; margin-top: 11px; border-radius: 3px; background: #828282; }
.scrollbar .down { width: 6px; height: 3px; margin-top: auto; background: #808080; clip-path: polygon(0 0, 100% 0, 50% 100%); }

.tip { position: absolute; right: 21px; bottom: 19px; width: 277px; height: 32px; padding: 0 8px; display: flex; align-items: center; gap: 6px; background: #fff; border: 1px solid #242424; border-radius: 4px; font-size: 12px; }
.tip .ic { width: 13px; height: 13px; }
.tip .chev { width: 12px; height: 12px; margin-left: auto; transform: rotate(180deg); stroke-width: 1; }

/* Windows taskbar */
.taskbar { flex: none; height: 43px; display: grid; grid-template-columns: 1fr auto 1fr; align-items: center; border-top: 1px solid #4a4246; background: linear-gradient(90deg, #1d1f2e, #221c32 15%, #2e1836 35%, #33201f 46%, #37221c 54%, #451621 63%, #3a1918 85%, #2c1b1d); color: #e6dede; }
.dock { grid-column: 2; height: 42px; display: flex; align-items: center; }
.dock button { width: 44px; height: 42px; padding-top: 3px; display: grid; place-items: center; position: relative; }
.dock button svg { width: 24px; height: 24px; overflow: visible; }
.dock .open { background: #ffffff14; border-radius: 4px 4px 0 0; }
.dock .run::after { content: ""; position: absolute; bottom: 0; left: 19px; width: 6px; height: 3px; border-radius: 2px; background: #9c8f92; }
.dock .open::after { left: 16px; width: 12px; background: #dba0e0; }
.dock-search { width: 220px; height: 32px; margin: 3px 2px 0 3px; padding: 0 3px 0 10px; display: flex; align-items: center; gap: 9px; border: 1px solid #ffffff24; border-radius: 16px; background: #ffffff24; }
.dock-search input { flex: 1; }
.dock-search input::placeholder { color: #d5cbce; opacity: 1; }
.dock-search .ic { stroke-width: 2; width: 16px; height: 16px; }
.shelf { width: 46px; height: 24px; flex: none; }
.dock-letter { fill: #fff; font: 700 10px "Open Sans", sans-serif; text-anchor: middle; }
.clock { padding: 3px 18px 0 0; display: grid; justify-items: end; font-size: 12px; line-height: 16px; }
```
